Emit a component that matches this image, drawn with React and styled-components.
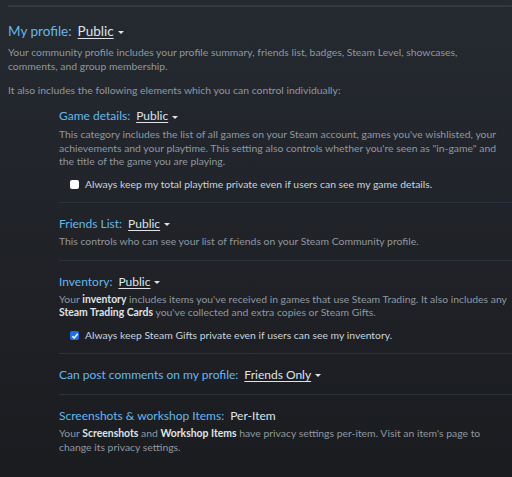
import React from "react";
import styled, { createGlobalStyle } from "styled-components";

const GlobalStyle = createGlobalStyle`
  html, body {
    margin: 0;
    padding: 0;
    background: #1b1c20;
  }
  body {
    font-family: Lato, "Liberation Sans", Arial, sans-serif;
  }
`;

const Page = styled.div`
  min-height: 477px;
  background: linear-gradient(180deg, #252a31 0%, #1f2126 60%, #1b1c20 100%);
  padding: 5px 0 0 8px;
  box-sizing: border-box;
  overflow: hidden;
  color: #8f98a0;
`;

const TopRule = styled.div`
  height: 2px;
  background: #323841;
`;

const Heading = styled.div`
  display: flex;
  align-items: baseline;
  gap: 6px;
  font-size: ${(p) => p.size || 12}px;
  line-height: ${(p) => p.lh || "15.5px"};
  color: #66b7ec;
  margin: ${(p) => p.margin || "0"};
`;

const Value = styled.span`
  color: #dfe3e6;
  display: inline-flex;
  align-items: center;
  gap: 4px;
  cursor: pointer;
`;

const Label = styled.span`
  text-decoration: underline;
  text-underline-offset: 2px;
`;

const Plain = styled.span`
  color: #dfe3e6;
`;

const Caret = styled.span`
  display: inline-block;
  width: 0;
  height: 0;
  border-left: 3px solid transparent;
  border-right: 3px solid transparent;
  border-top: 3.5px solid #dfe3e6;
  transform: translateY(1px);
`;

const Text = styled.p`
  margin: ${(p) => p.margin || "0"};
  font-size: 10.4px;
  line-height: 13.7px;
  color: #8f98a0;
  white-space: nowrap;

  b {
    color: #dfe3e6;
    font-weight: bold;
  }
`;

const Sections = styled.div`
  margin-left: 51px;
`;

const Section = styled.div`
  padding: ${(p) => p.pad || "13px 0 11px"};
  border-bottom: ${(p) => (p.last ? "none" : "1px solid #2c323b")};
`;

const CheckRow = styled.label`
  display: flex;
  align-items: center;
  gap: 6px;
  margin: 9px 0 0 11px;
  font-size: 10.4px;
  line-height: 13px;
  color: #c6d4df;
`;

const Box = styled.span`
  width: 9px;
  height: 9px;
  border-radius: 2px;
  background: ${(p) => (p.checked ? "#1e6fe8" : "#ffffff")};
  display: inline-flex;
  align-items: center;
  justify-content: center;
  flex-shrink: 0;
`;

const Dropdown = ({ children }) => (
  <Value>
    <Label>{children}</Label>
    <Caret />
  </Value>
);

const Check = ({ checked, children }) => (
  <CheckRow>
    <Box checked={checked}>
      {checked && (
        <svg width="8" height="8" viewBox="0 0 8 8">
          <path d="M1.3 4.2 L3.2 6 L6.8 1.8" stroke="#fff" strokeWidth="1.5" fill="none" />
        </svg>
      )}
    </Box>
    {children}
  </CheckRow>
);

export default function App() {
  return (
    <>
      <GlobalStyle />
      <Page>
        <TopRule />
        <Heading size={13.5} lh="1.2" margin="16px 0 0">
          My profile: <Dropdown>Public</Dropdown>
        </Heading>
        <Text margin="7px 0 0">
          Your community profile includes your profile summary, friends list, badges, Steam Level, showcases,
          <br />
          comments, and group membership.
        </Text>
        <Text margin="10px 0 0">It also includes the following elements which you can control individually:</Text>
        <Sections>
          <Section pad="11px 0 11px">
            <Heading>
              Game details: <Dropdown>Public</Dropdown>
            </Heading>
            <Text margin="4px 0 0">
              This category includes the list of all games on your Steam account, games you've wishlisted, your
              <br />
              achievements and your playtime. This setting also controls whether you're seen as "in-game" and
              <br />
              the title of the game you are playing.
            </Text>
            <Check>Always keep my total playtime private even if users can see my game details.</Check>
          </Section>
          <Section>
            <Heading>
              Friends List: <Dropdown>Public</Dropdown>
            </Heading>
            <Text margin="4px 0 0">This controls who can see your list of friends on your Steam Community profile.</Text>
          </Section>
          <Section>
            <Heading>
              Inventory: <Dropdown>Public</Dropdown>
            </Heading>
            <Text margin="3px 0 0">
              Your <b>inventory</b> includes items you've received in games that use Steam Trading. It also includes any
              <br />
              <b>Steam Trading Cards</b> you've collected and extra copies or Steam Gifts.
            </Text>
            <Check checked>Always keep Steam Gifts private even if users can see my inventory.</Check>
          </Section>
          <Section>
            <Heading>
              Can post comments on my profile: <Dropdown>Friends Only</Dropdown>
            </Heading>
          </Section>
          <Section last>
            <Heading>
              Screenshots &amp; workshop Items: <Plain>Per-Item</Plain>
            </Heading>
            <Text margin="4px 0 0">
              Your <b>Screenshots</b> and <b>Workshop Items</b> have privacy settings per-item. Visit an item's page to
              <br />
              change its privacy settings.
            </Text>
          </Section>
        </Sections>
      </Page>
    </>
  );
}
